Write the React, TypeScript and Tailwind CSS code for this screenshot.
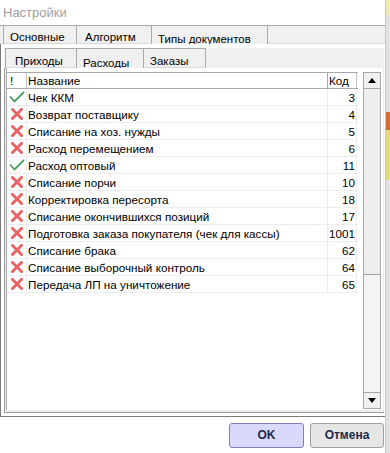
import React from 'react';

interface DocType {
  ok: boolean;
  name: string;
  code: number;
}

const rows: DocType[] = [
  { ok: true, name: 'Чек ККМ', code: 3 },
  { ok: false, name: 'Возврат поставщику', code: 4 },
  { ok: false, name: 'Списание на хоз. нужды', code: 5 },
  { ok: false, name: 'Расход перемещением', code: 6 },
  { ok: true, name: 'Расход оптовый', code: 11 },
  { ok: false, name: 'Списание порчи', code: 10 },
  { ok: false, name: 'Корректировка пересорта', code: 18 },
  { ok: false, name: 'Списание окончившихся позиций', code: 17 },
  { ok: false, name: 'Подготовка заказа покупателя (чек для кассы)', code: 1001 },
  { ok: false, name: 'Списание брака', code: 62 },
  { ok: false, name: 'Списание выборочный контроль', code: 64 },
  { ok: false, name: 'Передача ЛП на уничтожение', code: 65 },
];

const CheckIcon = () => (
  <svg width="16" height="12" viewBox="0 0 16 12">
    <polyline points="1,5.5 5.5,10.5 15,1" fill="none" stroke="#4b9d60" strokeWidth="1.8" />
  </svg>
);

const CrossIcon = () => (
  <svg width="12" height="12" viewBox="0 0 12 12">
    <path d="M1.5 1.5 L10.5 10.5 M10.5 1.5 L1.5 10.5" stroke="#e86466" strokeWidth="3" strokeLinecap="square" />
  </svg>
);

const App: React.FC = () => {
  return (
    <div className="w-[390px] h-[453px] flex bg-white overflow-hidden text-[11.5px] text-black font-['Liberation_Sans',Arial,sans-serif]">
      <div className="w-[385px] flex flex-col">
        {/* window title */}
        <div className="h-[25px] pl-[3px] pt-[1px] flex items-center text-[13px] text-[#a0a0a0]">Настройки</div>

        {/* outer tabs */}
        <div className="h-[19px] flex bg-[#f0f0f0] border-t border-[#a9a9a9]">
          <div className="w-[3px] border-b border-[#d9d9d9]" />
          <div className="w-[74px] border-l border-r border-b border-[#a9a9a9] border-b-[#d9d9d9] pl-[6px] pt-[3px]">Основные</div>
          <div className="w-[75px] border-r border-b border-[#a9a9a9] border-b-[#d9d9d9] pl-[8px] pt-[3px]">Алгоритм</div>
          <div className="w-[116px] border-r border-[#a9a9a9] pl-[6px] pt-[5px]">Типы документов</div>
          <div className="flex-1 border-b border-[#d9d9d9]" />
        </div>

        {/* outer page */}
        <div className="h-[373px] flex flex-col bg-white border-l border-b border-[#7a7a7a] pl-[3px] pr-[1px] pt-[4px] pb-[3px]">
          {/* inner tabs */}
          <div className="h-[20px] flex bg-[#f0f0f0]">
            <div className="w-[1px]" />
            <div className="w-[72px] border-t border-l border-r border-b border-[#a9a9a9] border-b-[#d9d9d9] pl-[9px] pt-[4px]">Приходы</div>
            <div className="w-[67px] border-t border-r border-[#a9a9a9] pl-[6px] pt-[6px]">Расходы</div>
            <div className="w-[62px] border-t border-r border-b border-[#a9a9a9] border-b-[#d9d9d9] pl-[6px] pt-[4px]">Заказы</div>
            <div className="flex-1" />
          </div>

          {/* inner page */}
          <div className="flex-1 flex bg-[#ececec] border-l border-b border-[#9c9c9c] pl-[1px] pb-[2px] pr-[2px]">
            <div className="flex-1 flex bg-white border-l border-[#a9a9a9] pt-[4px]">
              {/* grid */}
              <div className="w-[351px] flex flex-col text-[11.7px]">
                <div className="h-[17px] flex border-t border-b border-[#a9a9a9] bg-white">
                  <div className="w-[20px] border-r border-[#c4c4c4] pl-[3px] pt-[1px] flex items-center">!</div>
                  <div className="w-[301px] border-r border-[#a9a9a9] pl-[1px] pt-[1px] flex items-center">Название</div>
                  <div className="w-[29px] border-r border-[#c4c4c4] pl-[1px] pt-[1px] flex items-center">Код</div>
                </div>
                {rows.map((row) => (
                  <div key={row.code} className="h-[17px] flex border-b border-[#ededed]">
                    <div className="w-[20px] border-r border-[#ededed] flex items-center justify-center">
                      {row.ok ? <CheckIcon /> : <CrossIcon />}
                    </div>
                    <div className="w-[301px] border-r border-[#ededed] pl-[1px] pt-[2px] flex items-center whitespace-nowrap">{row.name}</div>
                    <div className="w-[29px] border-r border-[#ededed] pr-[1px] pt-[2px] flex items-center justify-end">{row.code}</div>
                  </div>
                ))}
              </div>

              {/* scrollbar */}
              <div className="w-[5px]" />
              <div className="w-[18px] flex flex-col border-l border-r border-[#a9a9a9] mb-[1px]">
                <div className="h-[17px] border-t border-b border-[#a9a9a9] bg-[#f0f0f0] flex items-center justify-center">
                  <svg width="8" height="5" viewBox="0 0 8 5">
                    <polygon points="0,5 8,5 4,0" fill="#000" />
                  </svg>
                </div>
                <div className="h-[186px] bg-[#ededed] border-b border-[#a0a0a0]" />
                <div className="flex-1 bg-[repeating-conic-gradient(#ececec_0%_25%,#ffffff_0%_50%)] bg-[length:2px_2px]" />
                <div className="h-[17px] border-t border-b border-[#a9a9a9] bg-[#f0f0f0] flex items-center justify-center">
                  <svg width="8" height="5" viewBox="0 0 8 5">
                    <polygon points="0,0 8,0 4,5" fill="#000" />
                  </svg>
                </div>
              </div>
              <div className="w-[2px]" />
            </div>
          </div>
        </div>

        {/* buttons */}
        <div className="flex-1 flex items-center justify-end gap-[6px] pr-[1px] font-bold text-[12px] text-[#1c2a48]">
          <button type="button" className="w-[75px] h-[25px] rounded-[3px] border border-[#8080b8] bg-[#d8d9fb]">OK</button>
          <button type="button" className="w-[74px] h-[25px] rounded-[3px] border border-[#a0a0a0] bg-[#e6e6e6]">Отмена</button>
        </div>
      </div>

      {/* edge of the window behind */}
      <div className="w-[5px] flex flex-col border-l border-[#c8c8c8] bg-[#e2e2e2]">
        <div className="h-[15px] bg-[#efeab4]" />
        <div className="h-[97px]" />
        <div className="h-[18px] bg-[#d46c36]" />
        <div className="h-[50px] bg-[#e3db7a]" />
        <div className="flex-1" />
      </div>
    </div>
  );
};

export default App;
